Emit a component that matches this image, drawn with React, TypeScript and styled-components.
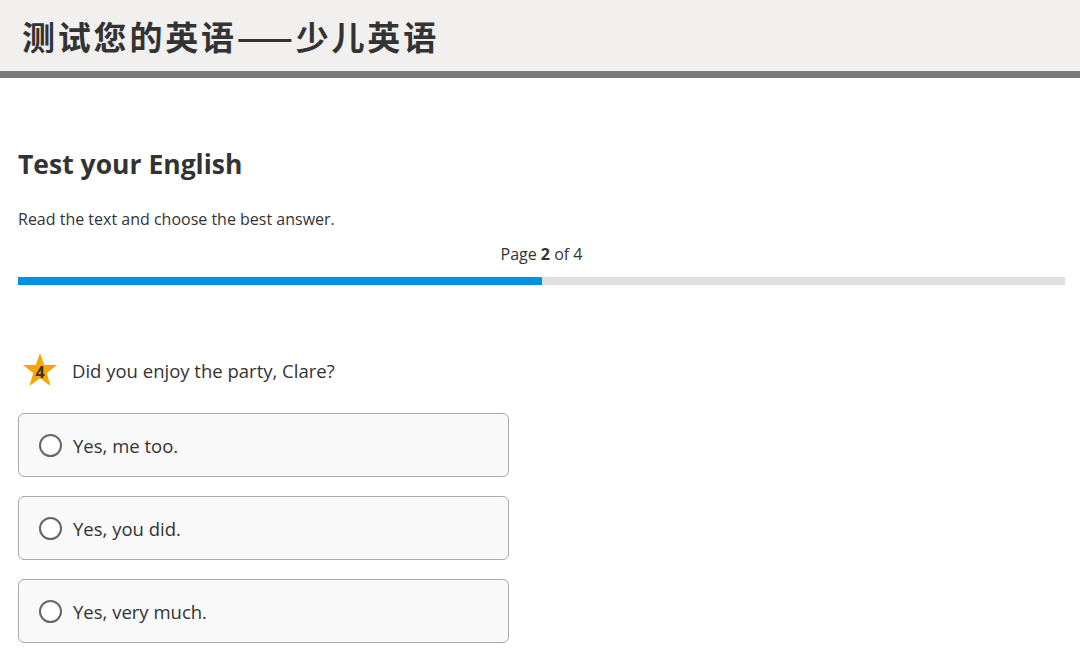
import React from 'react'
import styled, { createGlobalStyle } from 'styled-components'

const GlobalStyle = createGlobalStyle`
  html, body {
    margin: 0;
    padding: 0;
    background: #fff;
  }
  body {
    font-family: "Open Sans", "Noto Sans", "Noto Sans CJK SC", sans-serif;
    color: #333;
  }
`

const Header = styled.header`
  height: 71px;
  background: #f1f0ef;
  border-bottom: 7px solid #76787a;
  display: flex;
  align-items: center;
  padding-left: 22px;
`

const HeaderTitle = styled.h1`
  margin: 0;
  font-family: "Noto Sans CJK SC", "Noto Sans", sans-serif;
  font-weight: 700;
  font-size: 33px;
  color: #333;
  letter-spacing: 2.8px;
`

const Main = styled.main`
  padding: 0 15px 0 18px;
`

const Title = styled.h2`
  margin: 68px 0 0;
  font-size: 26.5px;
  line-height: 36px;
  font-weight: 700;
  color: #333;
`

const Instructions = styled.p`
  margin: 26px 0 0;
  font-size: 16px;
  line-height: 22px;
  color: #333;
`

const PageInfo = styled.div`
  margin-top: 13px;
  text-align: center;
  font-size: 16px;
  line-height: 22px;
  color: #333;

  b {
    font-weight: 700;
  }
`

const Track = styled.div`
  margin-top: 12px;
  height: 8px;
  background: #e0e0e0;
`

const Fill = styled.div`
  height: 100%;
  background: #0090e8;
`

const Question = styled.div`
  margin-top: 67px;
  display: flex;
  align-items: center;
  gap: 14px;
  padding-left: 4px;
`

const Star = styled.div`
  position: relative;
  width: 36px;
  height: 36px;
  display: flex;
  align-items: center;
  justify-content: center;

  svg {
    position: absolute;
    inset: 0;
  }

  span {
    position: relative;
    font-size: 16px;
    font-weight: 700;
    color: #333;
    margin-top: 3px;
  }
`

const QuestionText = styled.div`
  font-size: 18.5px;
  color: #333;
`

const Options = styled.div`
  margin-top: 25px;
  display: flex;
  flex-direction: column;
  gap: 19px;
  width: 491px;
`

const Option = styled.label`
  box-sizing: border-box;
  height: 64px;
  border: 1px solid #aaa;
  border-radius: 6px;
  background: #f9f9f9;
  display: flex;
  align-items: center;
  padding-left: 20px;
  gap: 11px;
  font-size: 18.5px;
  color: #333;
  cursor: pointer;
`

const Radio = styled.span`
  box-sizing: border-box;
  width: 23px;
  height: 23px;
  border-radius: 50%;
  border: 2px solid #666;
  background: #fff;
`

const answers = ['Yes, me too.', 'Yes, you did.', 'Yes, very much.']

export default function App() {
  const page = 2
  const total = 4
  return (
    <>
      <GlobalStyle />
      <Header>
        <HeaderTitle>测试您的英语——少儿英语</HeaderTitle>
      </Header>
      <Main>
        <Title>Test your English</Title>
        <Instructions>Read the text and choose the best answer.</Instructions>
        <PageInfo>
          Page <b>{page}</b> of {total}
        </PageInfo>
        <Track>
          <Fill style={{ width: `${(page / total) * 100}%` }} />
        </Track>
        <Question>
          <Star>
            <svg viewBox="0 0 36 36" width="36" height="36">
              <polygon
                points="18,1 22.3,13 35,13 24.8,21 28.6,34 18,26.3 7.4,34 11.2,21 1,13 13.7,13"
                fill="#f5a800"
              />
            </svg>
            <span>4</span>
          </Star>
          <QuestionText>Did you enjoy the party, Clare?</QuestionText>
        </Question>
        <Options>
          {answers.map((a) => (
            <Option key={a}>
              <Radio />
              {a}
            </Option>
          ))}
        </Options>
      </Main>
    </>
  )
}
